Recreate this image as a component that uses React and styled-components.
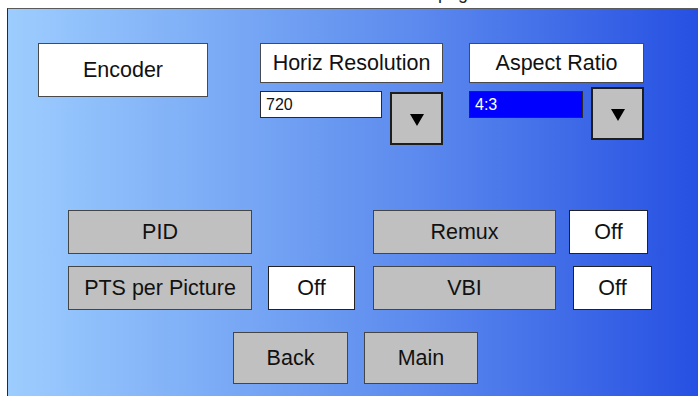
import styled, { createGlobalStyle } from "styled-components";

const GlobalStyle = createGlobalStyle`
  * { box-sizing: border-box; }
  html, body {
    margin: 0;
    background: #ffffff;
    font-family: "Liberation Sans", Arial, sans-serif;
  }
`;

const Page = styled.div`
  width: 698px;
  height: 396px;
  display: flex;
  flex-direction: column;
  overflow: hidden;
`;

const TopStrip = styled.div`
  height: 8px;
  overflow: hidden;
  background: #ffffff;
  padding-left: 366px;
`;

const Caption = styled.div`
  margin-top: -16px;
  font-size: 18px;
  line-height: 18px;
  color: #222;
  white-space: nowrap;
`;

const Panel = styled.div`
  flex: 1;
  margin-left: 7px;
  border-top: 1px solid #5a5a5a;
  border-left: 1px solid #2a2a2a;
  background: linear-gradient(90deg, #9dcdfe 0%, #76a6f4 35%, #5b89ee 60%, #2650e2 100%);
  display: flex;
  flex-direction: column;
  padding-top: 34px;
`;

const TopRow = styled.div`
  display: flex;
  align-items: flex-start;
  padding-left: 30px;
`;

const Column = styled.div`
  display: flex;
  flex-direction: column;
  width: ${(p) => p.$w}px;
  margin-left: ${(p) => p.$ml}px;
`;

const LabelBox = styled.div`
  width: ${(p) => (p.$w ? `${p.$w}px` : "100%")};
  height: ${(p) => p.$h}px;
  background: #ffffff;
  border: 1px solid #4a4a4a;
  display: flex;
  align-items: center;
  justify-content: center;
  font-size: 21.5px;
  color: #111;
`;

const FieldRow = styled.div`
  display: flex;
  align-items: flex-start;
  gap: 8px;
  margin-top: ${(p) => p.$mt}px;
`;

const Field = styled.div`
  width: ${(p) => p.$w}px;
  height: 27px;
  margin-top: ${(p) => p.$mt || 0}px;
  background: ${(p) => (p.$selected ? "#0000ff" : "#ffffff")};
  color: ${(p) => (p.$selected ? "#ffffff" : "#111")};
  border: 1px solid #2a2a2a;
  font-size: 16px;
  line-height: 25px;
  padding-left: 5px;
`;

const DropButton = styled.div`
  width: 53px;
  height: 53px;
  margin-top: ${(p) => p.$mt || 0}px;
  background: #c0c0c0;
  border: 2px solid #1e1e1e;
  display: flex;
  align-items: center;
  justify-content: center;
  padding-top: 2px;
`;

const Grid = styled.div`
  display: grid;
  grid-template-columns: 184px 16px 87px 18px 183px 14px 79px;
  grid-auto-rows: 44px;
  row-gap: 12px;
  margin-top: 65px;
  padding-left: 60px;
`;

const GreyButton = styled.div`
  grid-column: ${(p) => p.$col};
  background: #c0c0c0;
  border: 1px solid #454545;
  display: flex;
  align-items: center;
  justify-content: center;
  font-size: 21.5px;
  color: #111;
`;

const OffBox = styled.div`
  grid-column: ${(p) => p.$col};
  margin-left: ${(p) => p.$shift || 0}px;
  width: ${(p) => p.$w}px;
  background: #ffffff;
  border: 1px solid #222;
  display: flex;
  align-items: center;
  justify-content: center;
  font-size: 21.5px;
  color: #111;
`;

const BottomRow = styled.div`
  display: flex;
  gap: 16px;
  margin-top: 22px;
  padding-left: 225px;
`;

const NavButton = styled.div`
  width: ${(p) => p.$w}px;
  height: 52px;
  background: #c0c0c0;
  border: 1px solid #454545;
  display: flex;
  align-items: center;
  justify-content: center;
  font-size: 21.5px;
  color: #111;
`;

const DownTriangle = () => (
  <svg width="16" height="14" viewBox="0 0 16 14">
    <polygon points="1,1 15,1 8,13" fill="#000" />
  </svg>
);

export default function App() {
  return (
    <Page>
      <GlobalStyle />
      <TopStrip>
        <Caption>Encoder page</Caption>
      </TopStrip>
      <Panel>
        <TopRow>
          <LabelBox $w={170} $h={54}>Encoder</LabelBox>
          <Column $w={183} $ml={52}>
            <LabelBox $h={40}>Horiz Resolution</LabelBox>
            <FieldRow $mt={8}>
              <Field $w={122}>720</Field>
              <DropButton $mt={1}>
                <DownTriangle />
              </DropButton>
            </FieldRow>
          </Column>
          <Column $w={175} $ml={26}>
            <LabelBox $h={40}>Aspect Ratio</LabelBox>
            <FieldRow $mt={4}>
              <Field $w={114} $mt={4} $selected>
                4:3
              </Field>
              <DropButton>
                <DownTriangle />
              </DropButton>
            </FieldRow>
          </Column>
        </TopRow>

        <Grid>
          <GreyButton $col={1}>PID</GreyButton>
          <GreyButton $col={5}>Remux</GreyButton>
          <OffBox $col={7} $w={79} $shift={-1}>Off</OffBox>
          <GreyButton $col={1}>PTS per Picture</GreyButton>
          <OffBox $col={3} $w={87}>Off</OffBox>
          <GreyButton $col={5}>VBI</GreyButton>
          <OffBox $col={7} $w={79} $shift={3}>Off</OffBox>
        </Grid>

        <BottomRow>
          <NavButton $w={115}>Back</NavButton>
          <NavButton $w={114}>Main</NavButton>
        </BottomRow>
      </Panel>
    </Page>
  );
}
